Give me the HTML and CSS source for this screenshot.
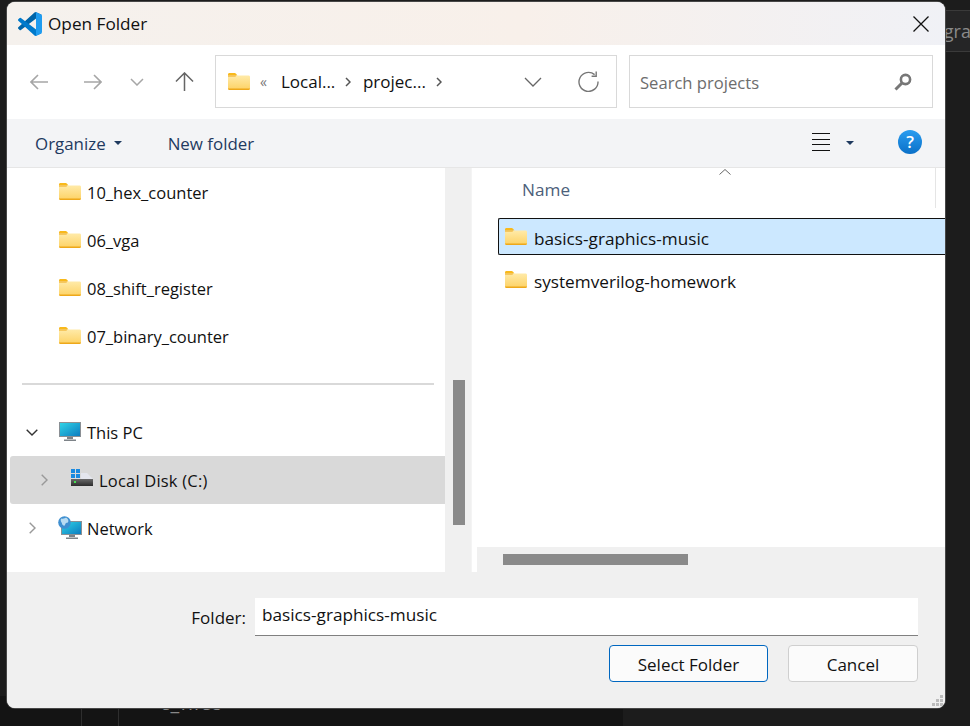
FILE: index.html
```html
<!DOCTYPE html>
<html lang="en">
  <head>
    <meta charset="UTF-8" />
    <title>Open Folder</title>
    <link rel="stylesheet" href="styles.css">
  </head>
  <body>
    <svg class="defs" width="0" height="0">
      <defs>
        <linearGradient id="folder-fill" x1="0" y1="0" x2="0" y2="1">
          <stop offset="0" stop-color="#ffeaa8" />
          <stop offset="1" stop-color="#fdd264" />
        </linearGradient>
        <linearGradient id="screen-fill" x1="0" y1="0" x2="1" y2="1">
          <stop offset="0" stop-color="#2fd3e6" />
          <stop offset="1" stop-color="#0c7cc0" />
        </linearGradient>
        <linearGradient id="disk-fill" x1="0" y1="0" x2="0" y2="1">
          <stop offset="0" stop-color="#6a6a6a" />
          <stop offset="1" stop-color="#2c2c2c" />
        </linearGradient>
        <symbol id="folder" viewBox="0 0 22 17">
          <path d="M0 1.5C0 .7.6 0 1.4 0h5.2c.5 0 .9.2 1.2.5L9.5 2.4H0z" fill="#f8b91c" />
          <path d="M0 2.6h20.6c.8 0 1.4.6 1.4 1.4v11.6c0 .8-.6 1.4-1.4 1.4H1.4C.6 17 0 16.4 0 15.6z" fill="url(#folder-fill)" />
          <path d="M0 15.6h22c0 .8-.6 1.4-1.4 1.4H1.4C.6 17 0 16.4 0 15.6zM0 2.4h8.6L7.4 3.6H0z" fill="#eea81a" />
        </symbol>
      </defs>
    </svg>

    <div class="behind">
      <div class="tab-strip"><span class="tab-text">-gra</span></div>
      <div class="lower-left"></div>
      <div class="line line-a"></div>
      <div class="line line-b"></div>
      <div class="peek-text">c_files</div>
    </div>

    <div class="dialog">
      <div class="title-bar">
        <svg class="app-logo" viewBox="0 0 100 100" width="24" height="24">
          <path fill="#0065a9" d="M96.46 10.8 75.86.88A6.2 6.2 0 0 0 68.75 2.08L1.3 63.58a4.2 4.2 0 0 0 0 6.16l5.51 5.01a4.2 4.2 0 0 0 5.32.24L93.36 13.37C96.09 11.3 100 13.25 100 16.67v-.24c0-2.4-1.38-4.59-3.54-5.63Z" />
          <path fill="#007acc" d="M96.46 89.2 75.86 99.12a6.2 6.2 0 0 1-7.11-1.2L1.3 36.42a4.2 4.2 0 0 1 0-6.16l5.51-5.01a4.2 4.2 0 0 1 5.32-.24l81.23 61.62C96.09 88.7 100 86.75 100 83.33v.24c0 2.4-1.38 4.59-3.54 5.63Z" />
          <path fill="#1f9cf0" d="M75.86 99.13a6.2 6.2 0 0 1-7.11-1.21C71.06 100.22 75 98.59 75 95.33V4.67c0-3.26-3.94-4.89-6.25-2.59A6.2 6.2 0 0 1 75.86.87l20.6 9.91A6.25 6.25 0 0 1 100 16.41v67.18a6.25 6.25 0 0 1-3.54 5.63Z" />
        </svg>
        <span class="title-text">Open Folder</span>
        <svg class="close-icon" viewBox="0 0 16 16" width="16" height="16">
          <path d="M.5.5l15 15M15.5.5l-15 15" fill="none" stroke="#111" stroke-width="1.3" />
        </svg>
      </div>

      <div class="nav-bar">
        <div class="nav-buttons">
          <svg class="nav-back" viewBox="0 0 18 16" width="18" height="16"><path d="M18 8H1M8 1 1 8l7 7" fill="none" stroke="#a6a6a6" stroke-width="1.6" /></svg>
          <svg class="nav-forward" viewBox="0 0 18 16" width="18" height="16"><path d="M0 8h17M10 1l7 7-7 7" fill="none" stroke="#a6a6a6" stroke-width="1.6" /></svg>
          <svg class="nav-recent" viewBox="0 0 14 8" width="14" height="8"><path d="M1 1l6 6 6-6" fill="none" stroke="#a6a6a6" stroke-width="1.5" /></svg>
          <svg class="nav-up" viewBox="0 0 20 20" width="19" height="19"><path d="M10 20V2M1 10l9-9 9 9" fill="none" stroke="#666" stroke-width="1.6" /></svg>
        </div>
        <div class="address-box">
          <svg class="folder-icon" width="22" height="17"><use href="#folder" /></svg>
          <span class="crumb-more">«</span>
          <span class="crumb crumb-local">Local...</span>
          <svg class="crumb-sep" viewBox="0 0 6 10" width="6" height="10"><path d="M1 1l4 4-4 4" fill="none" stroke="#555" stroke-width="1.5" /></svg>
          <span class="crumb crumb-project">projec...</span>
          <svg class="crumb-sep" viewBox="0 0 6 10" width="6" height="10"><path d="M1 1l4 4-4 4" fill="none" stroke="#555" stroke-width="1.5" /></svg>
          <svg class="address-drop" viewBox="0 0 18 10" width="18" height="10"><path d="M1 1l8 8 8-8" fill="none" stroke="#666" stroke-width="1.3" /></svg>
          <svg class="refresh-icon" viewBox="0 0 21 21" width="21" height="21"><path d="M16.6 3.6A9.5 9.5 0 1 0 20 10.5" fill="none" stroke="#777" stroke-width="1.4" /><path d="M18.2.6v4.6h-4.6" fill="none" stroke="#777" stroke-width="1.4" /></svg>
        </div>
        <div class="search-box">
          <span class="search-text">Search projects</span>
          <svg class="search-icon" viewBox="0 0 18 18" width="18" height="18"><circle cx="11.5" cy="6.5" r="4.6" fill="none" stroke="#777" stroke-width="2.6" /><path d="M8 10 1.5 16.5" stroke="#777" stroke-width="3" /></svg>
        </div>
      </div>

      <div class="tool-bar">
        <span class="tool-item">Organize</span>
        <svg class="tool-caret" viewBox="0 0 8 4" width="8" height="4"><path d="M0 0h8L4 4z" fill="#1f3a5f" /></svg>
        <span class="tool-item new-folder">New folder</span>
        <div class="view-icon"><span></span><span></span><span></span><span></span></div>
        <svg class="view-caret" viewBox="0 0 8 4" width="8" height="4"><path d="M0 0h8L4 4z" fill="#1f3a5f" /></svg>
        <div class="help-icon">?</div>
      </div>

      <div class="content">
        <div class="tree-pane">
          <div class="tree-row"><svg class="folder-icon" width="22" height="17"><use href="#folder" /></svg><span>10_hex_counter</span></div>
          <div class="tree-row"><svg class="folder-icon" width="22" height="17"><use href="#folder" /></svg><span>06_vga</span></div>
          <div class="tree-row"><svg class="folder-icon" width="22" height="17"><use href="#folder" /></svg><span>08_shift_register</span></div>
          <div class="tree-row"><svg class="folder-icon" width="22" height="17"><use href="#folder" /></svg><span>07_binary_counter</span></div>
          <div class="tree-divider"></div>
          <div class="tree-row root-row">
            <svg class="twisty twisty-open" viewBox="0 0 12 7" width="12" height="7"><path d="M.7.7 6 6 11.3.7" fill="none" stroke="#333" stroke-width="1.4" /></svg>
            <svg class="device-icon" viewBox="0 0 22 20" width="22" height="20">
              <rect x="0" y="0" width="22" height="15" fill="#8a8f94" />
              <rect x="1" y="1" width="20" height="13" fill="url(#screen-fill)" />
              <path d="M8 15h6v2H8zM5 17.5h12V19H5z" fill="#7d8388" />
            </svg>
            <span>This PC</span>
          </div>
          <div class="tree-row disk-row">
            <svg class="twisty" viewBox="0 0 7 12" width="7" height="12"><path d="M.7.7 6 6 .7 11.3" fill="none" stroke="#999" stroke-width="1.4" /></svg>
            <svg class="disk-icon" viewBox="0 0 22 18" width="22" height="18">
              <path d="M0 0h4v4H0zM5 0h4v4H5zM0 5h4v4H0zM5 5h4v4H5z" fill="#1a8ae0" />
              <path d="M10 4h6l6 6H0V9.500h10z" fill="#e4e6ee" />
              <rect x="0" y="10" width="22" height="7" fill="url(#disk-fill)" />
              <rect x="3" y="12" width="2" height="2" fill="#45e050" />
            </svg>
            <span class="disk-text">Local Disk (C:)</span>
          </div>
          <div class="tree-row root-row">
            <svg class="twisty twisty-net" viewBox="0 0 7 12" width="7" height="12"><path d="M.7.7 6 6 .7 11.3" fill="none" stroke="#999" stroke-width="1.4" /></svg>
            <svg class="device-icon net-icon" viewBox="0 0 24 24" width="24" height="24">
              <rect x="3" y="5" width="21" height="14" fill="#8a8f94" />
              <rect x="4" y="6" width="19" height="12" fill="url(#screen-fill)" />
              <path d="M11 19h6v2h-6zM8 21.5h12V23H8z" fill="#7d8388" />
              <circle cx="6.5" cy="6.5" r="6.3" fill="#3f8fd0" />
              <path d="M3 2.5c2 .5 4 0 5-1 2 1 3 3 2 5-2 0-3 1-3 3-2 .5-3-1-3-2s-2-2-1-5z" fill="#b9dcf2" />
            </svg>
            <span>Network</span>
          </div>
        </div>
        <div class="tree-scroll"><div class="tree-thumb"></div></div>
        <div class="pane-split"></div>
        <div class="file-pane">
          <div class="file-area">
            <div class="file-head">
              <span class="name-col">Name</span>
              <svg class="sort-caret" viewBox="0 0 12 6" width="12" height="6"><path d="M.5 5.5 6 .5l5.5 5" fill="none" stroke="#666" stroke-width="1" /></svg>
              <div class="col-line"></div>
            </div>
            <div class="file-row file-row-selected"><svg class="folder-icon" width="22" height="17"><use href="#folder" /></svg><span>basics-graphics-music</span></div>
            <div class="file-row"><svg class="folder-icon" width="22" height="17"><use href="#folder" /></svg><span>systemverilog-homework</span></div>
          </div>
          <div class="file-scroll"><div class="file-thumb"></div></div>
        </div>
      </div>

      <div class="footer">
        <div class="folder-line">
          <span class="folder-label">Folder:</span>
          <div class="folder-input">basics-graphics-music</div>
        </div>
        <div class="button-line">
          <div class="btn btn-main">Select Folder</div>
          <div class="btn">Cancel</div>
        </div>
        <svg class="grip" viewBox="0 0 12 12" width="12" height="12">
          <path d="M8 0h3v3H8zM4 4h3v3H4zM8 4h3v3H8zM0 8h3v3H0zM4 8h3v3H4zM8 8h3v3H8z" fill="#bcbcbc" />
        </svg>
      </div>
    </div>
  </body>
</html>
```

FILE: styles.css
```css
* {
  box-sizing: border-box;
}
html,
body {
  margin: 0;
  height: 726px;
  overflow: hidden;
}
body {
  background-color: #1c1c1c;
  font-family: "Open Sans", "Liberation Sans", sans-serif;
  font-size: 16.5px;
  color: #111;
  position: relative;
}
.defs {
  position: absolute;
}

/* editor showing behind the window */
.behind {
  position: absolute;
  inset: 0;
}
.tab-strip {
  position: absolute;
  left: 900px;
  top: 10px;
  width: 70px;
  height: 42px;
  background-color: #252526;
  border-top: 1px solid #3a3a3a;
  border-bottom: 1px solid #3a3a3a;
}
.tab-text {
  position: absolute;
  left: 38px;
  top: 8px;
  color: #8a8a8a;
  font-size: 18px;
  white-space: nowrap;
}
.lower-left {
  position: absolute;
  left: 0;
  bottom: 0;
  width: 623px;
  height: 30px;
  background-color: #141414;
}
.line {
  position: absolute;
  bottom: 0;
  width: 1px;
  height: 20px;
  background-color: #2e2e2e;
}
.line-a {
  left: 81px;
}
.line-b {
  left: 118px;
}
.peek-text {
  position: absolute;
  left: 160px;
  top: 689px;
  color: #888;
  font-size: 20px;
  letter-spacing: 1px;
}

/* window */
.dialog {
  position: absolute;
  left: 7px;
  top: 2px;
  width: 938px;
  height: 706px;
  display: flex;
  flex-direction: column;
  border-radius: 8px;
  overflow: hidden;
  background-color: #fff;
  box-shadow: 0 0 0 1px #474747;
}
.title-bar {
  height: 43px;
  display: flex;
  align-items: center;
  padding: 0 16px 0 11px;
  background: linear-gradient(90deg, #f5f1ed 0%, #f8f0ea 55%, #f0f1f6 100%);
}
.title-text {
  margin-left: 6px;
  font-size: 17.2px;
}
.close-icon {
  margin-left: auto;
}

.nav-bar {
  height: 74px;
  display: flex;
  align-items: center;
  padding-bottom: 1px;
}
.nav-buttons {
  width: 208px;
  display: flex;
  align-items: center;
  padding-left: 23px;
}
.nav-forward {
  margin-left: 36px;
}
.nav-recent {
  margin-left: 28px;
}
.nav-up {
  margin-left: 31px;
}
.address-box {
  width: 402px;
  height: 53px;
  border: 1px solid #d9d9d9;
  display: flex;
  align-items: center;
  padding-left: 12px;
}
.crumb-more {
  margin-left: 10px;
  color: #777;
  font-size: 14px;
}
.crumb {
  font-size: 17px;
}
.crumb-local {
  margin-left: 14px;
  width: 64px;
}
.crumb-project {
  margin-left: 12px;
  width: 73px;
}
.address-drop {
  margin-left: 82px;
}
.refresh-icon {
  margin-left: 36px;
}
.search-box {
  width: 304px;
  height: 53px;
  margin-left: 12px;
  border: 1px solid #d9d9d9;
  display: flex;
  align-items: center;
  padding: 0 20px 0 10px;
}
.search-text {
  color: #6d6d6d;
  font-size: 16.6px;
  padding-top: 1px;
}
.search-icon {
  margin-left: auto;
}

.tool-bar {
  height: 49px;
  display: flex;
  align-items: center;
  padding-left: 28px;
  background-color: #f3f4f6;
  border-bottom: 1px solid #e6e6e6;
}
.tool-item {
  color: #1f3a5f;
  font-size: 16.9px;
}
.tool-caret {
  margin-left: 8px;
}
.new-folder {
  margin-left: 46px;
}
.view-icon {
  margin-left: auto;
  margin-top: -2px;
  width: 18px;
  display: flex;
  flex-direction: column;
  gap: 4.5px;
}
.view-icon span {
  height: 1px;
  background-color: #111;
}
.view-caret {
  margin-left: 16px;
}
.help-icon {
  width: 24px;
  height: 24px;
  margin: -2px 23px 0 44px;
  border-radius: 50%;
  background: linear-gradient(#2a9df0, #0a70c8);
  color: #fff;
  font-size: 17px;
  font-weight: 600;
  line-height: 24px;
  text-align: center;
}

.content {
  height: 404px;
  display: flex;
  align-items: stretch;
}
.tree-pane {
  width: 438px;
  padding-left: 3px;
}
.tree-row {
  height: 48px;
  display: flex;
  align-items: center;
  padding-left: 49px;
}
.tree-row .folder-icon {
  margin-right: 6px;
  margin-top: -1px;
}
.tree-divider {
  height: 2px;
  width: 412px;
  margin: 23px 0 23px 12px;
  background-color: #d9d9d9;
}
.root-row {
  position: relative;
}
.twisty {
  position: absolute;
  left: 31px;
}
.twisty-open {
  left: 16px;
}
.twisty-net {
  left: 19px;
}
.device-icon {
  margin-right: 6px;
}
.net-icon {
  margin-left: -1px;
  margin-right: 5px;
}
.disk-row {
  position: relative;
  padding-left: 61px;
  background-color: #d9d9d9;
  border-radius: 3px 0 0 3px;
}
.disk-icon {
  margin-right: 6px;
  margin-top: -4px;
}
.disk-text {
  letter-spacing: 0.2px;
}
.tree-scroll {
  width: 26px;
  background-color: #f0f0f0;
  padding-left: 8px;
}
.tree-thumb {
  width: 12px;
  height: 145px;
  margin-top: 212px;
  background-color: #8a8a8a;
}
.pane-split {
  width: 6px;
  background-color: #fff;
  border-left: 1px solid #f4f4f4;
}
.file-pane {
  flex: 1;
  display: flex;
  flex-direction: column;
  min-width: 0;
}
.file-area {
  height: 379px;
  font-size: 17.2px;
}
.file-head {
  height: 50px;
  position: relative;
  padding: 10px 0 0 45px;
}
.name-col {
  color: #4c607a;
}
.sort-caret {
  position: absolute;
  left: 242px;
  top: 1px;
}
.col-line {
  position: absolute;
  left: 458px;
  top: 0;
  width: 1px;
  height: 40px;
  background-color: #e5e5e5;
}
.file-row {
  height: 37px;
  margin: 0 0 6px 21px;
  display: flex;
  align-items: center;
  padding-left: 6px;
  border: 1px solid transparent;
}
.file-row .folder-icon {
  margin-right: 7px;
}
.file-row span {
  padding-top: 3px;
}
.file-row-selected {
  background-color: #cce8ff;
  border-color: #111;
  border-right: 0;
  border-radius: 2px 0 0 2px;
}
.file-scroll {
  height: 25px;
  background-color: #f0f0f0;
  padding: 7px 0 0 26px;
}
.file-thumb {
  width: 185px;
  height: 11px;
  background-color: #8a8a8a;
}

.footer {
  flex: 1;
  position: relative;
  background-color: #f0f0f0;
  padding-top: 26px;
}
.folder-line {
  display: flex;
  align-items: flex-start;
  justify-content: flex-end;
  padding-right: 27px;
}
.folder-label {
  margin: 8px 9px 0 0;
  font-size: 17px;
}
.folder-input {
  width: 663px;
  height: 38px;
  padding: 5px 7px;
  font-size: 17.2px;
  background-color: #fff;
  border-bottom: 1px solid #808080;
}
.button-line {
  display: flex;
  justify-content: flex-end;
  gap: 20px;
  margin-top: 9px;
  padding-right: 27px;
}
.btn {
  width: 130px;
  height: 37px;
  line-height: 37px;
  text-align: center;
  font-size: 17px;
  background-color: #fbfbfb;
  border: 1px solid #cfcfcf;
  border-radius: 4px;
}
.btn-main {
  width: 159px;
  border-color: #0067c0;
}
.grip {
  position: absolute;
  right: 1px;
  bottom: 1px;
}
```
